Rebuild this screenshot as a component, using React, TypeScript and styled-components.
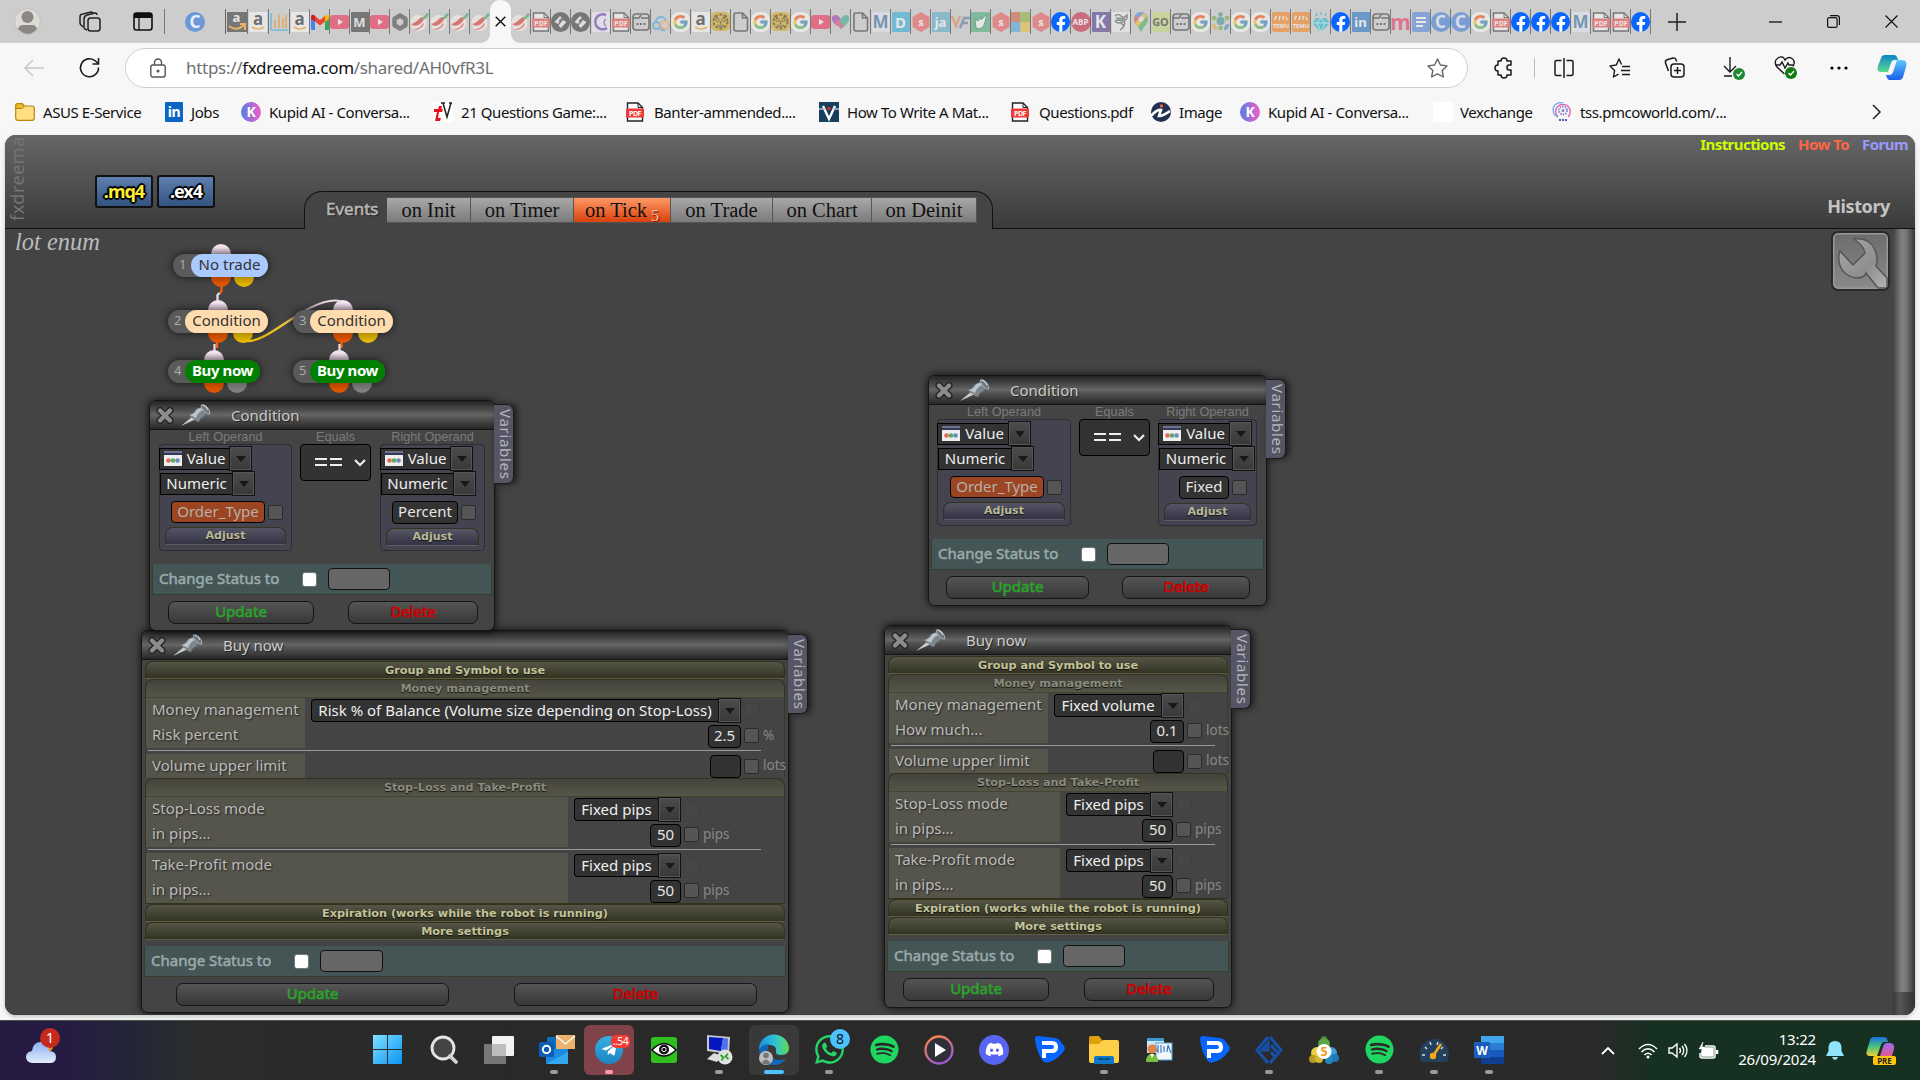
import React from "react";
import styled, { createGlobalStyle, css } from "styled-components";
import { FaDiscord, FaFacebookF, FaSpotify, FaTelegramPlane, FaWhatsapp } from "react-icons/fa";
import { FcGoogle } from "react-icons/fc";

//favicons
type Fav = {
  kind: string;
  text?: string;
  bg?: string;
  color?: string;
  size?: number;
  round?: boolean;
  full?: boolean;
};

const letter = (text: string, bg: string, color: string, size = 14, round = false): Fav => ({
  kind: "letter",
  text,
  bg,
  color,
  size,
  round,
});
const g: Fav = { kind: "google" };
const fb: Fav = { kind: "facebook", full: true };
const pdf: Fav = { kind: "pdf" };
const chili: Fav = { kind: "chili" };
const yt: Fav = { kind: "youtube" };
const doc: Fav = { kind: "doc" };
const dots: Fav = { kind: "dots" };
const tiger: Fav = { kind: "tiger" };
const amazon: Fav = { kind: "amazon" };
const gem: Fav = { kind: "gem" };
const sHex: Fav = { kind: "shex" };
const temu: Fav = { kind: "temu" };
const coursera = letter("C", "#2a6fdb", "#e8eefc", 17, true);
const mIcon = letter("M", "#e6eef5", "#1f5f93", 17);

const leftTabs: Fav[] = [
  { kind: "amazonDark" },
  amazon,
  { kind: "bars" },
  amazon,
  { kind: "gmail", full: true },
  yt,
  letter("M", "#222", "#eee", 13),
  yt,
  { kind: "hexagon" },
  chili,
  chili,
  chili,
  chili,
];
const rightTabs: Fav[] = [
  chili, pdf, { kind: "diamondDark" }, { kind: "diamondDark" }, { kind: "moon" }, pdf, dots,
  { kind: "cloud" }, g, amazon, tiger, doc, g, tiger, g, yt, { kind: "heart" }, doc, mIcon,
  letter("D", "#1aa7d8", "#fff", 15), sHex, letter("ja", "#4aa8c8", "#fff", 13), { kind: "vf" },
  { kind: "leaf" }, sHex, { kind: "microsoft" }, sHex, fb, letter("ABP", "#c70d2c", "#fff", 8, true),
  letter("K", "#3b2584", "#fff", 17), { kind: "scribble" }, { kind: "maps" },
  letter("GO", "#c5dc70", "#222", 11), dots, g, { kind: "people" }, g, g, temu, temu, gem, fb,
  letter("in", "#0a66c2", "#fff", 13), dots, letter("m", "transparent", "#ee1c4e", 21),
  { kind: "lines" }, coursera, coursera, g, pdf, fb, fb, fb, mIcon, pdf, pdf, fb,
];

const FavIcon = ({ kind }: { kind: string }) => {
  switch (kind) {
    case "google":
      return (
        <svg width="19" height="20" viewBox="0 0 19 20">
          <rect width="19" height="20" rx="8" fill="#fff" />
          <FcGoogle x="1" y="1.500" width="17" height="17" size={17} />
        </svg>
      );
    case "facebook":
      return (
        <FbCircle>
          <FaFacebookF size={16} />
        </FbCircle>
      );
    case "pdf":
      return (
        <svg width="18" height="20" viewBox="0 0 18 20">
          <path d="M1.500 1h10.500l4.500 4.500v13.500h-15z" fill="#fff" stroke="#222" strokeWidth="1.400" />
          <path d="M12 1v4.500h4.500" fill="none" stroke="#222" />
          <rect y="6.500" width="18" height="9" rx="1" fill="#f23a3a" />
          <text x="9" y="13.800" fontSize="7" fontWeight="700" fill="#fff" textAnchor="middle" fontFamily="Noto Sans, sans-serif">PDF</text>
        </svg>
      );
    case "chili":
      return (
        <svg width="19" height="19" viewBox="0 0 19 19">
          <circle cx="8.500" cy="11" r="8" fill="#fbf6f2" />
          <path d="M1 12C6 11 8 7 12 5c3 0 2 4-1 6-3 3-7 4-10 1z" fill="#e2231a" />
          <path d="M3 17c5 0 8-3 10-6 2 1 0 4-2 5-2 2-5 3-8 1z" fill="#ef6a5c" />
          <path d="M12 6c2-1 3-3 5-5l2 1c-1 3-4 5-6 6z" fill="#2f9e3f" />
        </svg>
      );
    case "youtube":
      return (
        <svg width="19" height="14" viewBox="0 0 19 14">
          <rect width="19" height="14" rx="3" fill="#f4133f" />
          <path d="M8 4l5 3-5 3z" fill="#fff" />
        </svg>
      );
    case "doc":
      return (
        <svg width="16" height="20" viewBox="0 0 16 20">
          <path d="M3 1h6.500l5 5v11q0 2-2 2H3q-2 0-2-2V3q0-2 2-2zM9.500 1v5h5" fill="none" stroke="#222" strokeWidth="1.600" />
        </svg>
      );
    case "dots":
      return (
        <svg width="18" height="18" viewBox="0 0 18 18" fill="none" stroke="#222" strokeWidth="1.600">
          <rect x="1" y="1" width="16" height="16" rx="3" />
          <path d="M1 5h6l2-3M9 5h8" />
          <path d="M4.500 11h2M8 11h2M11.500 11h2" strokeWidth="2" />
        </svg>
      );
    case "tiger":
      return (
        <svg width="19" height="19" viewBox="0 0 19 19" fill="none" stroke="#3a2c00">
          <rect width="19" height="19" rx="5" fill="#dca400" stroke="none" />
          <circle cx="9.500" cy="9.500" r="7" strokeDasharray="3 1.500" strokeWidth="2" />
          <circle cx="6.500" cy="8" r="1.600" />
          <circle cx="12.500" cy="8" r="1.600" />
          <path d="M9.500 9v4M6 13l3.500 2 3.500-2M3 4l4 2M16 4l-4 2" strokeWidth="1.400" />
        </svg>
      );
    case "amazon":
      return (
        <AmazonTile>
          a
          <svg width="14" height="5" viewBox="0 0 14 5">
            <path d="M1 1q6 4 12 0" stroke="#ff9900" strokeWidth="1.600" fill="none" />
          </svg>
        </AmazonTile>
      );
    case "amazonDark":
      return (
        <AmazonTile $dark>
          a
          <svg width="18" height="9" viewBox="0 0 18 9">
            <path d="M1 3q8 6 15-1M12 1h5v6" stroke="#ff9900" strokeWidth="2" fill="none" />
          </svg>
        </AmazonTile>
      );
    case "bars":
      return (
        <svg width="18" height="20" viewBox="0 0 18 20">
          <path d="M1 1v17h17" stroke="#4ab0e0" strokeWidth="2" fill="none" />
          <path d="M5 8v8M9 3v13M13 6v10M16 3v13" stroke="#f0922a" strokeWidth="2" />
        </svg>
      );
    case "gmail":
      return (
        <svg width="18" height="16" viewBox="0 0 18 16">
          <path d="M0 3v12q0 1 1 1h3V6z" fill="#4285f4" />
          <path d="M18 3v12q0 1-1 1h-3V6z" fill="#34a853" />
          <path d="M14 6V2l1-1q3-1 3 2v2l-4 3z" fill="#fbbc04" />
          <path d="M4 7.500V2l5 4 5-4v5.500l-5 4z" fill="#ea4335" />
          <path d="M0 5V3q0-3 3-2l1 1v5.500z" fill="#c5221f" />
        </svg>
      );
    case "hexagon":
      return (
        <svg width="16" height="18" viewBox="0 0 16 18">
          <path d="M8 2.500l5.500 3.200v6.600L8 15.500l-5.500-3.200V5.700z" fill="none" stroke="#333" strokeWidth="4.500" strokeLinejoin="round" />
        </svg>
      );
    case "diamondDark":
      return (
        <svg width="19" height="20" viewBox="0 0 19 20">
          <rect width="19" height="20" rx="9.500" fill="#222" />
          <path d="M3.500 10L9 4l2.500 2.500L7 12zM7.500 13.500L12 8l3.500 2L10 16z" fill="#eee" />
          <path d="M8 9.500l3-3" stroke="#222" strokeWidth="1.500" />
        </svg>
      );
    case "moon":
      return (
        <svg width="18" height="20" viewBox="0 0 18 20">
          <rect width="18" height="20" fill="#f4eefc" />
          <path d="M14 3a7.500 7.500 0 1 0 1 13" fill="none" stroke="#5a2fa8" strokeWidth="2.500" />
          <path d="M14 7a4 4 0 0 0 0 7" stroke="#5a2fa8" fill="none" strokeWidth="1.300" />
        </svg>
      );
    case "cloud":
      return (
        <svg width="18" height="18" viewBox="0 0 18 18" fill="none" strokeWidth="2">
          <path d="M4 9a5 4.500 0 0 1 10-1" stroke="#39a0e0" />
          <circle cx="4.500" cy="12.500" r="3.500" stroke="#39a0e0" />
          <circle cx="13" cy="12" r="4" stroke="#f0a850" />
          <path d="M8 15q2 3 5 2" stroke="#39a0e0" />
        </svg>
      );
    case "heart":
      return (
        <svg width="19" height="18" viewBox="0 0 19 18">
          <path d="M1 7q-1-5 4-5 2 0 5 4l-4 7q-4-3-5-6z" fill="#8d2bb0" />
          <path d="M18 7q1-5-4-5-2 0-8 10l4 4q7-5 8-9z" fill="#22a27e" />
          <path d="M6 6l6 6-2 4-6-6z" fill="#e7366a" />
        </svg>
      );
    case "shex":
      return (
        <svg width="18" height="20" viewBox="0 0 18 20">
          <path d="M9 0l8.500 5v10L9 20l-8.500-5V5z" fill="#f04a4a" />
          <text x="9" y="14" fontSize="11" fontWeight="700" textAnchor="middle" fill="#fff" fontFamily="Noto Sans, sans-serif">s</text>
        </svg>
      );
    case "temu":
      return (
        <svg width="18" height="20" viewBox="0 0 18 20">
          <rect width="18" height="20" rx="2" fill="#fb7701" />
          <path d="M3 8V6l1.500-2M7 8l1-4M11 8V5l1-1M15 8l-1-3" stroke="#fff" strokeWidth="1.300" fill="none" />
          <text x="9" y="15.500" fontSize="5.800" fontWeight="700" textAnchor="middle" fill="#fff" fontFamily="Noto Sans, sans-serif">TEMU</text>
        </svg>
      );
    case "vf":
      return (
        <svg width="19" height="14" viewBox="0 0 19 14" fill="none" strokeWidth="2.500">
          <path d="M1 1l4 10 4-10" stroke="#e0803a" />
          <path d="M9 13l4-10h6M11 8h6" stroke="#4a6d96" />
        </svg>
      );
    case "leaf":
      return (
        <svg width="19" height="20" viewBox="0 0 19 20">
          <rect width="19" height="20" fill="#35a86a" />
          <path d="M4 7l1 9q7 3 9-6l2-8-6 6V4l-3 5z" fill="#fff" stroke="#174" />
        </svg>
      );
    case "microsoft":
      return (
        <svg width="19" height="20" viewBox="0 0 19 20">
          <rect width="9.500" height="10" fill="#d2502a" />
          <rect x="9.500" width="9.500" height="10" fill="#7fae1e" />
          <rect y="10" width="9.500" height="10" fill="#3aa0dc" />
          <rect x="9.500" y="10" width="9.500" height="10" fill="#f0b828" />
        </svg>
      );
    case "scribble":
      return (
        <svg width="18" height="20" viewBox="0 0 18 20">
          <rect width="18" height="20" fill="#f4f4f4" />
          <path d="M3 4q3-3 6 0t6-1q1 4-2 5t-6 0q-5 0-3 2 4 2 7 0t1 4q-2 3-4 4M4 6l9 1M8 10l4 4" stroke="#555" strokeWidth="1.500" fill="none" />
        </svg>
      );
    case "maps":
      return (
        <svg width="14" height="20" viewBox="0 0 14 20">
          <path d="M7 0a7 7 0 0 1 7 7q0 4-4 8l-3 5-3-5q-4-4-4-8a7 7 0 0 1 7-7z" fill="#34a853" />
          <path d="M7 0a7 7 0 0 0-6 4l4 3 5-6z" fill="#3f7ce8" />
          <path d="M1 4q-2 3 0 7l5-6z" fill="#e04438" />
          <path d="M1 11l3 4 9-11-3-3z" fill="#f5bb18" />
          <circle cx="7" cy="7" r="2.500" fill="#eee" />
        </svg>
      );
    case "people":
      return (
        <svg width="19" height="19" viewBox="0 0 19 19">
          <circle cx="9.500" cy="9" r="4" fill="#2e8a8a" />
          <circle cx="9.500" cy="2.500" r="2.300" fill="#2e8a8a" />
          <circle cx="3" cy="6" r="2.300" fill="#60a830" />
          <circle cx="16" cy="6" r="2.300" fill="#60a830" />
          <path d="M1 12q5-1 5 6-5 0-5-6z" fill="#e0a82a" />
          <path d="M18 12q-5-1-5 6 5 0 5-6z" fill="#2a88c8" />
          <circle cx="9.500" cy="16" r="2.300" fill="#60a830" />
        </svg>
      );
    case "gem":
      return (
        <svg width="18" height="20" viewBox="0 0 18 20">
          <path d="M4 6h10l4 5-9 9-9-9z" fill="#12b0d0" />
          <path d="M0 11h18M9 20L5 11l4-5 4 5z" stroke="#9ff" fill="none" />
          <path d="M9 0v3M4 1l1 3M14 1l-1 3" stroke="#12b0d0" strokeWidth="1.500" />
        </svg>
      );
    case "lines":
      return (
        <svg width="18" height="20" viewBox="0 0 18 20">
          <rect width="18" height="20" rx="2" fill="#3f7ae0" />
          <path d="M4 6h10M4 10h10M4 14h7" stroke="#fff" strokeWidth="2" />
        </svg>
      );
    default:
      return null;
  }
};

const renderFav = (fav: Fav) =>
  fav.kind === "letter" ? (
    <LetterIcon $bg={fav.bg} $color={fav.color} $size={fav.size} $round={fav.round}>
      {fav.text}
    </LetterIcon>
  ) : (
    <FavIcon kind={fav.kind} />
  );

//bookmarks
const bookmarks = [
  { label: "ASUS E-Service", width: 150, gap: 28, icon: "folder" },
  { label: "Jobs", width: 76, gap: 26, icon: "in" },
  { label: "Kupid AI - Conversa...", width: 192, gap: 28, icon: "kupid" },
  { label: "21 Questions Game:...", width: 193, gap: 28, icon: "tv" },
  { label: "Banter-ammended....", width: 193, gap: 28, icon: "pdf" },
  { label: "How To Write A Mat...", width: 192, gap: 28, icon: "v" },
  { label: "Questions.pdf", width: 140, gap: 28, icon: "pdf" },
  { label: "Image", width: 89, gap: 28, icon: "image" },
  { label: "Kupid AI - Conversa...", width: 193, gap: 28, icon: "kupid" },
  { label: "Vexchange", width: 122, gap: 27, icon: "blank" },
  { label: "tss.pmcoworld.com/...", width: 180, gap: 25, icon: "tss" },
];

const BookmarkIcon = ({ icon }: { icon: string }) => {
  switch (icon) {
    case "folder":
      return (
        <svg width="20" height="18" viewBox="0 0 20 18">
          <path d="M.7 3q0-2.300 2-2.300h4.500l2 2.300H17q2.300 0 2.300 2.300V15q0 2.300-2.300 2.300H3Q.7 17.300.7 15z" fill="#ffdf82" stroke="#b8860b" strokeWidth="1.200" />
          <path d="M.7 5.500h6.500l2-2.300-2-2.500H2.700q-2 0-2 2z" fill="#ecb92e" stroke="#b8860b" />
        </svg>
      );
    case "in":
      return <LetterIcon $bg="#0a66c2" $color="#fff" $size={14}>in</LetterIcon>;
    case "kupid":
      return <KupidIcon>K</KupidIcon>;
    case "tv":
      return (
        <svg width="20" height="20" viewBox="0 0 20 20">
          <rect width="20" height="20" fill="#fff" />
          <path d="M1 7h9l-1 3H6l-1 6h3l-1 3H2l2-9H1zM6 4h3l-1 4H5z" fill="#e8101c" />
          <path d="M8 1h4M10 1l4 14 4-14M16 1h3" fill="none" stroke="#222" strokeWidth="1.500" />
        </svg>
      );
    case "pdf":
      return <FavIcon kind="pdf" />;
    case "v":
      return (
        <svg width="20" height="20" viewBox="0 0 20 20">
          <rect width="20" height="20" fill="#17405f" />
          <path d="M4 4l6 13 6-13" fill="none" stroke="#fff" strokeWidth="2.400" />
          <path d="M0 7h6M14 7h6" stroke="#aebecb" strokeWidth="1.300" />
          <circle cx="10" cy="6.500" r="1.800" fill="#e02828" />
        </svg>
      );
    case "image":
      return (
        <svg width="20" height="20" viewBox="0 0 20 20">
          <circle cx="10" cy="10" r="10" fill="#23304f" />
          <path d="M0 14q6-7 10-6l-2 6q4 0 11-5" fill="none" stroke="#fff" strokeWidth="2.600" />
          <circle cx="10.500" cy="4" r="1.700" fill="#ee5a46" />
        </svg>
      );
    case "tss":
      return (
        <svg width="16" height="20" viewBox="0 0 16 20" fill="none">
          <path d="M3 15A7.300 7.300 0 1 1 13 15" stroke="#e65fb0" strokeWidth="1.300" />
          <path d="M3 15A7.300 7.300 0 0 1 8 1" stroke="#62a8f0" strokeWidth="1.300" />
          <circle cx="8" cy="8.500" r="4" stroke="#8a80c8" strokeWidth="2" strokeDasharray="1.500 1" />
          <circle cx="8" cy="8.500" r="1.500" fill="#8a80c8" />
          <path d="M4 18h8" stroke="#5060b0" strokeWidth="2" strokeDasharray="2 1" />
        </svg>
      );
    default:
      return <BlankIcon />;
  }
};

const tabBarEvents = [
  { label: "on Init", width: 84 },
  { label: "on Timer", width: 103 },
  { label: "on Tick", width: 97, count: 5 },
  { label: "on Trade", width: 102 },
  { label: "on Chart", width: 99 },
  { label: "on Deinit", width: 105 },
];

//diagram blocks
const blocks = [
  { id: 1, name: "No trade", x: 173, y: 254, num: 18, width: 95, port: 48, out: 71, color: "#a9c9ff" },
  { id: 2, name: "Condition", x: 168, y: 310, num: 17, width: 100, port: 50, out: 75, color: "#ffdcae" },
  { id: 3, name: "Condition", x: 293, y: 310, num: 17, width: 100, port: 50, out: 75, color: "#ffdcae" },
  { id: 4, name: "Buy now", x: 168, y: 360, num: 17, width: 92, port: 46, out: 69, color: "#008000" },
  { id: 5, name: "Buy now", x: 293, y: 360, num: 17, width: 92, port: 46, out: 69, color: "#008000" },
];

const PinIcon = () => (
  <svg width="30" height="22" viewBox="0 0 30 22">
    <path d="M0 22L12 12l3 3z" fill="#c9cccd" />
    <path d="M8 11q5-1 6-5l6-3 6 6-4 4q-3 1-4 5-3 0-5-3-3-1-5-4z" fill="#7d868c" />
    <path d="M9 11q6-2 7-6l4-1 2 2q-5 2-7 8z" fill="#bcc5ca" />
    <path d="M20 1q3-1 6 2t3 7q-2 1-5-2t-4-7z" fill="#6d7880" stroke="#a7b1b7" />
    <path d="M22 1q3 1 5 5" stroke="#e8eef0" fill="none" />
  </svg>
);

const CloseIcon = () => (
  <svg width="18" height="18" viewBox="0 0 18 18">
    <path d="M4 4.500l10 10M14 4.500l-10 10" stroke="#242424" strokeWidth="7" strokeLinecap="round" />
    <path d="M4 4.500l10 10M14 4.500l-10 10" stroke="#8c8c8c" strokeWidth="4.400" strokeLinecap="round" />
  </svg>
);

const ValueIcon = () => (
  <svg width="18" height="15" viewBox="0 0 18 15">
    <rect width="18" height="15" fill="#eee" />
    <rect width="18" height="4" fill="#323a5c" />
    <path d="M0 1h18" stroke="#aab" />
    <circle cx="4.500" cy="9.500" r="2.300" fill="#e06a55" />
    <circle cx="9" cy="9.500" r="2.300" fill="#5cac60" />
    <circle cx="13.500" cy="9.500" r="2.300" fill="#6b8ac0" />
  </svg>
);

type WindowProps = {
  title: string;
  x: number;
  y: number;
  w: number;
  h: number;
  children: React.ReactNode;
};

const BlockWindow = ({ title, x, y, w, h, children }: WindowProps) => (
  <WindowBox $x={x} $y={y} $w={w} $h={h}>
    <WindowHeader>
      <CloseIcon />
      <PinIcon />
      <WindowTitle>{title}</WindowTitle>
    </WindowHeader>
    {children}
    <VariablesTab>Variables</VariablesTab>
  </WindowBox>
);

const Dropdown = ({ label, width, icon, square }: { label: string; width?: number; icon?: boolean; square?: boolean }) => (
  <SelectBox $width={width}>
    <SelectText $square={square}>
      {icon && <ValueIcon />}
      <SelectLabel>{label}</SelectLabel>
    </SelectText>
    <SelectArrow>
      <svg width="10" height="6" viewBox="0 0 10 6">
        <path d="M0 0h10L5 6z" fill="#181818" />
      </svg>
    </SelectArrow>
  </SelectBox>
);

type FooterProps = {
  checkLeft: number;
  inputWidth: number;
  left: number;
  update: number;
  between: number;
  remove: number;
};

const WindowFooter = ({ checkLeft, inputWidth, left, update, between, remove }: FooterProps) => (
  <>
    <StatusBar>
      <StatusLabel $width={checkLeft}>Change Status to</StatusLabel>
      <WhiteCheck />
      <StatusInput $width={inputWidth} />
    </StatusBar>
    <ButtonRow $left={left} $between={between}>
      <ActionBtn $width={update} $color="#2ca02c">Update</ActionBtn>
      <ActionBtn $width={remove} $color="#cc0000">Delete</ActionBtn>
    </ButtonRow>
  </>
);

type ConditionProps = {
  x: number;
  y: number;
  w: number;
  leftWidth: number;
  rightWidth: number;
  gaps: [number, number, number];
  selects: [number, number];
  leftIndent: number;
  right: string;
  rightInput: number;
  rightIndent: number;
  footer: FooterProps;
};

const ConditionWindow = (props: ConditionProps) => (
  <BlockWindow title="Condition" x={props.x} y={props.y} w={props.w} h={231}>
    <OperandRow>
      <Operand $width={props.leftWidth} $gap={props.gaps[0]}>
        <OperandLabel>Left Operand</OperandLabel>
        <OperandBox>
          <Dropdown label="Value" icon square width={props.selects[0]} />
          <Dropdown label="Numeric" square width={props.selects[1]} />
          <ParamRow $indent={props.leftIndent}>
            <ParamInput $width={94} $orange>Order_Type</ParamInput>
            <SmallCheck />
          </ParamRow>
          <AdjustBar>Adjust</AdjustBar>
        </OperandBox>
      </Operand>
      <Operand $width={71} $gap={props.gaps[1]}>
        <OperandLabel>Equals</OperandLabel>
        <EqualsBox>
          <EqualsSign>
            <path d="M0 2h12M15 2h12M0 8h12M15 8h12" stroke="#eee" strokeWidth="1.800" />
          </EqualsSign>
          <svg width="12" height="8" viewBox="0 0 12 8">
            <path d="M1 1l5 5 5-5" fill="none" stroke="#eee" strokeWidth="2.200" />
          </svg>
        </EqualsBox>
      </Operand>
      <Operand $width={props.rightWidth} $gap={props.gaps[2]}>
        <OperandLabel>Right Operand</OperandLabel>
        <OperandBox>
          <Dropdown label="Value" icon square width={props.selects[0]} />
          <Dropdown label="Numeric" square width={props.selects[1]} />
          <ParamRow $indent={props.rightIndent}>
            <ParamInput $width={props.rightInput}>{props.right}</ParamInput>
            <SmallCheck />
          </ParamRow>
          <AdjustBar>Adjust</AdjustBar>
        </OperandBox>
      </Operand>
    </OperandRow>
    <WindowFooter {...props.footer} />
  </BlockWindow>
);

type FieldProps = {
  label: string;
  labelWidth: number;
  controls: number;
  unit?: string;
  height?: number;
  children: React.ReactNode;
};

const Field = ({ label, labelWidth, controls, unit, height = 25, children }: FieldProps) => (
  <FieldRow $height={height}>
    <FieldLabel $width={labelWidth}>{label}</FieldLabel>
    <FieldControls $width={controls}>{children}</FieldControls>
    <SmallCheck $ghost={!unit} />
    <Unit>{unit}</Unit>
  </FieldRow>
);

type BuyProps = {
  x: number;
  y: number;
  w: number;
  mode: string;
  modeWidth: number;
  amountLabel: string;
  amount: string;
  amountWidth: number;
  amountUnit: string;
  limitWidth: number;
  money: [number, number];
  stops: [number, number];
  pipsWidth: [number, number];
  hr: number;
  footer: FooterProps;
};

const BuyWindow = (props: BuyProps) => {
  const money = { labelWidth: props.money[0], controls: props.money[1] };
  const stops = { labelWidth: props.stops[0], controls: props.stops[1] };
  return (
    <BlockWindow title="Buy now" x={props.x} y={props.y} w={props.w} h={383}>
      <Groups>
        <GroupBar>Group and Symbol to use</GroupBar>
        <GroupBar $open>Money management</GroupBar>
        <GroupBody>
          <Field label="Money management" {...money}>
            <Dropdown label={props.mode} width={props.modeWidth} />
          </Field>
          <Field label={props.amountLabel} unit={props.amountUnit} {...money}>
            <ParamInput $width={props.amountWidth}>{props.amount}</ParamInput>
          </Field>
          <Divider $width={props.hr} />
          <Field label="Volume upper limit" unit="lots" height={24} {...money}>
            <ParamInput $width={props.limitWidth} />
          </Field>
        </GroupBody>
        <GroupBar $open>Stop-Loss and Take-Profit</GroupBar>
        <GroupBody>
          <Field label="Stop-Loss mode" {...stops}>
            <Dropdown label="Fixed pips" width={props.pipsWidth[0]} />
          </Field>
          <Field label="in pips..." unit="pips" {...stops}>
            <ParamInput $width={props.pipsWidth[1]}>50</ParamInput>
          </Field>
          <Divider $width={props.hr} />
          <Field label="Take-Profit mode" {...stops}>
            <Dropdown label="Fixed pips" width={props.pipsWidth[0]} />
          </Field>
          <Field label="in pips..." unit="pips" {...stops}>
            <ParamInput $width={props.pipsWidth[1]}>50</ParamInput>
          </Field>
        </GroupBody>
        <GroupBar>Expiration (works while the robot is running)</GroupBar>
        <GroupBar>More settings</GroupBar>
      </Groups>
      <WindowFooter {...props.footer} />
    </BlockWindow>
  );
};

//taskbar
const TelegramCircle = styled.div`
  display: flex;
  align-items: center;
  justify-content: center;
  width: 28px;
  height: 28px;
  border-radius: 50%;
  background: linear-gradient(#37aee2, #1c84c0);
  color: #fff;
`;
const DiscordCircle = styled(TelegramCircle)`
  width: 30px;
  height: 30px;
  background: #5865f2;
`;

const BlueP = () => (
  <svg width="31" height="30" viewBox="0 0 31 30">
    <path d="M1 4q0-3 3-3l17 2q3 0 6 4l3 4q2 3-1 6-6 8-14 10-4 2-7-2Q2 15 1 4z" fill="#0866ff" />
    <path d="M10 23V16h8q4 0 4-4t-4-4H8" fill="none" stroke="#fff" strokeWidth="4" />
  </svg>
);

const SpotifyIcon = () => <FaSpotify size={29} color="#1ed760" />;

const taskItems: { id: string; running?: boolean; icon: React.ReactNode }[] = [
  {
    id: "start",
    icon: (
      <svg width="29" height="29" viewBox="0 0 29 29">
        <defs>
          <linearGradient id="win" x2="1" y2="1">
            <stop stopColor="#7fe0ff" />
            <stop offset="1" stopColor="#0a94f5" />
          </linearGradient>
        </defs>
        <path d="M0 0h14v14H0zM15 0h14v14H15zM0 15h14v14H0zM15 15h14v14H15z" fill="url(#win)" />
      </svg>
    ),
  },
  {
    id: "search",
    icon: (
      <svg width="30" height="30" viewBox="0 0 30 30">
        <circle cx="14" cy="13" r="11" fill="#444" stroke="#e3e6e8" strokeWidth="2.800" />
        <path d="M21 21l6 6" stroke="#d0d4d6" strokeWidth="3.800" strokeLinecap="round" />
      </svg>
    ),
  },
  {
    id: "taskview",
    icon: (
      <svg width="30" height="28" viewBox="0 0 30 28">
        <rect x="8" width="22" height="20" rx="1" fill="#f2f2f2" />
        <rect y="8" width="22" height="20" rx="1" fill="#777" />
        <rect x="8" y="8" width="14" height="12" fill="#bdbdbd" />
      </svg>
    ),
  },
  {
    id: "outlook",
    running: true,
    icon: (
      <svg width="36" height="30" viewBox="0 0 36 30">
        <path d="M8 2h12v26H8z" fill="#0f6cbd" />
        <path d="M7 14h22v14q0 1-1 1H8q-1 0-1-1z" fill="#1b8ae0" />
        <path d="M7 29l22-12v11q0 1-1 1z" fill="#36a6f2" />
        <rect y="7" width="15" height="15" rx="1.500" fill="#0a5cb5" />
        <circle cx="7.500" cy="14.500" r="3.700" fill="none" stroke="#fff" strokeWidth="2" />
        <rect x="17" width="19" height="14" fill="#eab26d" />
        <path d="M17 1l9.500 8L36 1" fill="none" stroke="#fff" strokeWidth="1.300" />
      </svg>
    ),
  },
  {
    id: "telegram",
    running: true,
    icon: (
      <TelegramCircle>
        <FaTelegramPlane size={17} />
      </TelegramCircle>
    ),
  },
  {
    id: "eye",
    icon: (
      <svg width="26" height="26" viewBox="0 0 26 26">
        <rect width="26" height="26" rx="3" fill="#2fc01f" />
        <path d="M1 13q12-13 24 0-12 12-24 0z" fill="#fff" stroke="#111" strokeWidth="1.600" />
        <circle cx="13" cy="12.500" r="5" fill="#111" />
        <circle cx="13" cy="12.500" r="2.200" fill="none" stroke="#fff" />
      </svg>
    ),
  },
  {
    id: "remote",
    running: true,
    icon: (
      <svg width="30" height="30" viewBox="0 0 30 30">
        <path d="M3 0l23 2-1 17-22-3z" fill="#c5c9ce" />
        <path d="M5 2l14 1-2 13-12-2z" fill="#0717c0" />
        <path d="M19 3l5 .5-.5 13-6.500-.5z" fill="#4f6ff0" />
        <path d="M3 24l7-6 8 3-5 6z" fill="#ddd" />
        <circle cx="21" cy="22" r="7.500" fill="#dfe3df" />
        <path d="M16.500 20l3 2.500-2 3M24 18.500l-2.500 3 3 2.500" stroke="#28a428" strokeWidth="1.800" fill="none" />
      </svg>
    ),
  },
  {
    id: "edge",
    running: true,
    icon: (
      <svg width="30" height="30" viewBox="0 0 30 30">
        <defs>
          <linearGradient id="edge" x2="1">
            <stop stopColor="#1d8fe0" />
            <stop offset=".55" stopColor="#2fc3d0" />
            <stop offset="1" stopColor="#62da54" />
          </linearGradient>
        </defs>
        <path d="M0 15A15 14.500 0 0 1 30 13q0 7-8 7-6 0-5-4 1-6-7-6-7 0-10 5z" fill="url(#edge)" />
        <path d="M0 15q3-6 10-6-3 6 0 11t12 5l5-1q-5 6-12 6Q1 30 0 15z" fill="#1268b8" />
        <circle cx="7" cy="23" r="7" fill="#bdbdbd" />
        <circle cx="7" cy="20.500" r="2.800" fill="#777" />
        <path d="M2.500 28q4.500-7 9 0-4.500 3-9 0z" fill="#777" />
      </svg>
    ),
  },
  { id: "whatsapp", running: true, icon: <FaWhatsapp size={33} color="#25d366" /> },
  { id: "spotify", icon: <SpotifyIcon /> },
  {
    id: "player",
    icon: (
      <svg width="30" height="30" viewBox="0 0 30 30">
        <defs>
          <linearGradient id="play" x2=".5" y2="1">
            <stop stopColor="#ff8a3c" />
            <stop offset="1" stopColor="#a45bd0" />
          </linearGradient>
        </defs>
        <circle cx="15" cy="15" r="13.500" fill="#2f2f38" stroke="url(#play)" strokeWidth="2.300" />
        <path d="M11 8l11 7-11 7z" fill="#fff" />
      </svg>
    ),
  },
  {
    id: "discord",
    icon: (
      <DiscordCircle>
        <FaDiscord size={19} />
      </DiscordCircle>
    ),
  },
  { id: "pa", icon: <BlueP /> },
  {
    id: "explorer",
    running: true,
    icon: (
      <svg width="30" height="28" viewBox="0 0 30 28">
        <path d="M0 2q0-2 2-2h8l3 4v6H0z" fill="#e0a008" />
        <path d="M0 8h10l4-4h14q2 0 2 2v19q0 2-2 2H2q-2 0-2-2z" fill="#ffcf48" />
        <path d="M5 28v-6q0-2 2-2h16q2 0 2 2v6z" fill="#0f78c8" />
        <path d="M9 23h12" stroke="#073f70" strokeWidth="1.500" />
      </svg>
    ),
  },
  {
    id: "accounts",
    icon: (
      <svg width="26" height="26" viewBox="0 0 26 26">
        <rect x="1" y="1" width="17" height="15" fill="#cfe8f5" />
        <path d="M1 1h17v3H1z" fill="#3b98cc" />
        <rect x="10" y="6" width="16" height="17" fill="#f4f7fa" stroke="#4aa0d0" />
        <path d="M8 15V9l4 6V8M15 16V8M18 9v6M21 15l1-7 3 8" stroke="#3b78c0" fill="none" strokeWidth="1.200" />
        <circle cx="6" cy="12" r="4.500" fill="#e2854a" />
        <path d="M0 25q0-8 6-8 6 0 6 8z" fill="#7ac040" />
        <path d="M4 17l2 4 2-4z" fill="#fff" />
      </svg>
    ),
  },
  { id: "pb", icon: <BlueP /> },
  {
    id: "layers",
    running: true,
    icon: (
      <svg width="28" height="28" viewBox="0 0 28 28" fill="none" stroke="#1650a8" strokeWidth="3">
        <path d="M13 1L2 14l11 13" />
        <path d="M15 1l11 13-11 13M7 14l6-7v7zM16 9l6 7M16 16l3 4" />
      </svg>
    ),
  },
  {
    id: "mt5",
    icon: (
      <svg width="30" height="28" viewBox="0 0 30 28">
        <circle cx="15" cy="3" r="3" fill="#3d8a35" />
        <circle cx="15" cy="8" r="6" fill="#5aa545" />
        <circle cx="8" cy="17" r="6" fill="#e6d03c" />
        <circle cx="4" cy="23" r="4" fill="#b89a20" />
        <circle cx="10" cy="23" r="4" fill="#d2b830" />
        <circle cx="22" cy="17" r="6" fill="#3aa0d0" />
        <circle cx="26" cy="22" r="4" fill="#1e78b8" />
        <circle cx="20" cy="24" r="4" fill="#2a86c0" />
        <circle cx="15" cy="15.500" r="7.500" fill="#fff" />
        <text x="15" y="20" fontSize="12.500" fontWeight="700" textAnchor="middle" fill="#f0a010" fontFamily="Noto Sans, sans-serif">5</text>
      </svg>
    ),
  },
  { id: "spotify2", running: true, icon: <SpotifyIcon /> },
  {
    id: "gauge",
    running: true,
    icon: (
      <svg width="30" height="24" viewBox="0 0 30 24">
        <path d="M1 21Q-1 8 8 3t16 1q8 7 5 18-1 2-3 2H4q-2 0-3-3z" fill="#25405c" />
        <path d="M3 17h3M24 17h3M6 9l2 2M22 11l2-2M11 4l1 3M19 4l-1 3" stroke="#ddd" strokeWidth="1.400" />
        <path d="M22 6l-8 12" stroke="#f5a81c" strokeWidth="2.600" />
        <circle cx="14" cy="18" r="3.200" fill="#f5a81c" />
      </svg>
    ),
  },
  {
    id: "word",
    running: true,
    icon: (
      <svg width="30" height="28" viewBox="0 0 30 28">
        <rect x="7" width="23" height="7" fill="#41a5ee" />
        <rect x="7" y="7" width="23" height="7" fill="#2b7cd3" />
        <rect x="7" y="14" width="23" height="7" fill="#185abd" />
        <rect x="7" y="21" width="23" height="7" fill="#103f91" />
        <rect y="6" width="16" height="16" rx="1" fill="#1a5dbe" />
        <text x="8" y="18.500" fontSize="12" fontWeight="700" textAnchor="middle" fill="#fff" fontFamily="Noto Sans, sans-serif">W</text>
      </svg>
    ),
  },
];

const App = () => {
  return (
    <Screen>
      <GlobalStyle />
      <TabStrip>
        <StripTools>
          <svg width="27" height="27" viewBox="0 0 27 27">
            <circle cx="13.500" cy="13.500" r="13" fill="#dedbd5" stroke="#c2c0bb" />
            <circle cx="13.500" cy="9" r="6" fill="#8a8784" />
            <path d="M4 21q1-4 5-4h9q4 0 5 4-9 10-19 0z" fill="#8a8784" />
          </svg>
          <svg width="22" height="22" viewBox="0 0 22 22" fill="none" stroke="#222" strokeWidth="1.500">
            <rect x="9" y="7" width="12" height="13" rx="2.500" />
            <path d="M8 19l-2-1q-1 0-1-2V8q0-3 3-4l8-2q2 0 2 2" />
            <path d="M4 16l-2-2q-1-1-1-2V6q0-3 3-3l8-2q2 0 2 1" />
          </svg>
          <svg width="20" height="19" viewBox="0 0 20 19">
            <rect x="1" y="1" width="18" height="17" rx="2.500" fill="none" stroke="#111" strokeWidth="1.600" />
            <path d="M1 5V3q0-2 2-2h14q2 0 2 2v3H1z" fill="#111" />
            <path d="M6 6v12" stroke="#111" strokeWidth="1.300" />
          </svg>
        </StripTools>
        <PinnedTab>
          <LetterIcon $bg="#6c98d8" $color="#e8eefc" $size={17} $round>C</LetterIcon>
        </PinnedTab>
        {leftTabs.map((fav, i) => (
          <TabCell key={i} $width={i === 0 ? 22 : i < 3 ? 21 : 20} $full={fav.full} $last={i === leftTabs.length - 1}>
            {renderFav(fav)}
          </TabCell>
        ))}
        <ActiveTab>
          <svg width="11" height="11" viewBox="0 0 11 11">
            <path d="M.7.700l9.600 9.600M10.300.700L.700 10.300" stroke="#111" strokeWidth="1.400" />
          </svg>
        </ActiveTab>
        {rightTabs.map((fav, i) => (
          <TabCell key={i} $width={20} $full={fav.full}>
            {renderFav(fav)}
          </TabCell>
        ))}
        <WindowButtons>
          <svg width="18" height="18" viewBox="0 0 18 18">
            <path d="M9 0v18M0 9h18" stroke="#222" strokeWidth="1.500" />
          </svg>
          <svg width="13" height="2" viewBox="0 0 13 2">
            <path d="M0 1h13" stroke="#111" strokeWidth="1.300" />
          </svg>
          <svg width="13" height="13" viewBox="0 0 13 13" fill="none" stroke="#111" strokeWidth="1.200">
            <rect x=".6" y="2.600" width="9.500" height="9.800" rx="1.500" />
            <path d="M3 .6h7q2.400 0 2.400 2.400v7" />
          </svg>
          <svg width="13" height="13" viewBox="0 0 13 13">
            <path d="M.5.500l12 12M12.500.500l-12 12" stroke="#111" strokeWidth="1.200" />
          </svg>
        </WindowButtons>
      </TabStrip>

      <Toolbar>
        <NavIcons>
          <svg width="20" height="18" viewBox="0 0 20 18" fill="none" stroke="#c8c8c8" strokeWidth="1.600">
            <path d="M9 1L1 9l8 8M1 9h19" />
          </svg>
          <svg width="21" height="21" viewBox="0 0 21 21" fill="none" stroke="#1b1b1b" strokeWidth="1.600">
            <path d="M19.500 10.500a9 9 0 1 1-3-6.500l2.500 2.500" />
            <path d="M19.500 1v6h-6" />
          </svg>
        </NavIcons>
        <AddressBar>
          <svg width="16" height="20" viewBox="0 0 16 20" fill="none" stroke="#555" strokeWidth="1.400">
            <rect x=".8" y="7" width="14.400" height="12" rx="2" />
            <path d="M4.500 7V4.500a3.500 3.500 0 0 1 7 0V7" />
            <circle cx="8" cy="13" r=".8" fill="#555" />
          </svg>
          <Url>
            https://<b>fxdreema.com</b>/shared/AH0vfR3L
          </Url>
          <svg width="21" height="20" viewBox="0 0 21 20" fill="none" stroke="#666" strokeWidth="1.400" strokeLinejoin="round">
            <path d="M10.500 1l2.900 6 6.600.900-4.800 4.600 1.200 6.500-5.900-3.100L4.600 19l1.200-6.500L1 7.900 7.600 7z" />
          </svg>
        </AddressBar>
        <ToolIcons>
          <ToolIcon $gap={25}>
            <svg width="22" height="22" viewBox="0 0 22 22" fill="none" stroke="#1b1b1b" strokeWidth="1.500" strokeLinejoin="round">
              <path d="M5 4h3q0-3 3-3t3 3h4v4h-2q-2 0-2 2.500t2 2.500h2v5h-4q0 3-3 3t-3-3H5v-4q-3 0-3-3t3-3z" />
            </svg>
          </ToolIcon>
          <ToolDivider />
          <ToolIcon $gap={19}>
            <svg width="20" height="20" viewBox="0 0 20 20" fill="none" stroke="#1b1b1b" strokeWidth="1.500">
              <path d="M10 0v20M7.500 2.500h-5Q1 2.500 1 4v12q0 1.500 1.500 1.500h5M12.500 2.500h5Q19 2.500 19 4v12q0 1.500-1.500 1.500h-5" />
            </svg>
          </ToolIcon>
          <ToolIcon $gap={35}>
            <svg width="21" height="20" viewBox="0 0 21 20" fill="none" stroke="#1b1b1b" strokeWidth="1.400" strokeLinejoin="round">
              <path d="M12.500 6.500L10 1 7.300 7 1 7.900l4.600 4.500L4.500 19l5-2.800M13 8.500h8M12 12.500h9M13 16.500h8" />
            </svg>
          </ToolIcon>
          <ToolIcon $gap={34}>
            <svg width="21" height="21" viewBox="0 0 21 21" fill="none" stroke="#1b1b1b" strokeWidth="1.500">
              <rect x="7" y="7" width="13" height="13" rx="3" />
              <path d="M13.500 10v7M10 13.500h7M4.500 14L1.500 6Q1 3.500 3 2.700L9 1q2-.5 3 1.500l.7 2" />
            </svg>
          </ToolIcon>
          <ToolIcon $gap={38}>
            <svg width="22" height="24" viewBox="0 0 22 24" fill="none" stroke="#1b1b1b" strokeWidth="1.400">
              <path d="M7 1v15M1 10l6 6 6-6M1 20h8" />
              <circle cx="16" cy="18" r="6" fill="#1d8a35" stroke="none" />
              <path d="M13.500 18l2 2 3.500-4" stroke="#fff" />
            </svg>
          </ToolIcon>
          <ToolIcon $gap={29}>
            <svg width="24" height="23" viewBox="0 0 24 23" fill="none" stroke="#1b1b1b" strokeWidth="1.400">
              <path d="M10.500 18L3 11Q-1 5 4 2t7 2q3-4 7-1.500t1 8M1 9h5l2-3 3 6 3-5 1 2h4" />
              <circle cx="17" cy="17" r="6" fill="#0f7a12" stroke="none" />
              <path d="M14.500 17l2 2 3.500-4" stroke="#fff" />
            </svg>
          </ToolIcon>
          <ToolIcon $gap={32}>
            <svg width="18" height="4" viewBox="0 0 18 4">
              <circle cx="2" cy="2" r="1.600" />
              <circle cx="9" cy="2" r="1.600" />
              <circle cx="16" cy="2" r="1.600" />
            </svg>
          </ToolIcon>
          <ToolIcon $gap={29}>
            <svg width="30" height="27" viewBox="0 0 30 27">
              <defs>
                <linearGradient id="cop1" x2="0" y2="1">
                  <stop stopColor="#0a84c8" />
                  <stop offset="1" stopColor="#5fdc8c" />
                </linearGradient>
                <linearGradient id="cop2" x2="0" y2="1">
                  <stop stopColor="#5cc8ff" />
                  <stop offset="1" stopColor="#1a5ee8" />
                </linearGradient>
              </defs>
              <path d="M8 1h9q3 0 4 5h-4q-2 0-3 3l-3 9H4q-5 0-3-6L4 4q1-3 4-3z" fill="url(#cop1)" />
              <path d="M22 26h-9q-3 0-4-5h4q2 0 3-3l4-12h5q6 0 4 7l-3 10q-1 3-4 3z" fill="url(#cop2)" />
            </svg>
          </ToolIcon>
        </ToolIcons>
      </Toolbar>

      <BookmarkBar>
        {bookmarks.map((item, i) => (
          <Bookmark key={i} $width={item.width}>
            <BookmarkSlot $width={item.gap}>
              <BookmarkIcon icon={item.icon} />
            </BookmarkSlot>
            {item.label}
          </Bookmark>
        ))}
        <MoreBookmarks width="9" height="16" viewBox="0 0 9 16">
          <path d="M1 1l7 7-7 7" fill="none" stroke="#222" strokeWidth="1.500" />
        </MoreBookmarks>
      </BookmarkBar>

      <Page>
        <PageHeader>
          <SideLogo>fxdreema</SideLogo>
          <ExportButtons>
            <ExportBtn $color="#ffee33">.mq4</ExportBtn>
            <ExportBtn $color="#fff">.ex4</ExportBtn>
          </ExportButtons>
          <EventTabs>
            <EventsLabel>Events</EventsLabel>
            {tabBarEvents.map((tab) => (
              <EventTab key={tab.label} $width={tab.width} $active={!!tab.count}>
                {tab.label}
                {tab.count && <EventCount>{tab.count}</EventCount>}
              </EventTab>
            ))}
          </EventTabs>
          <HeaderRight>
            <HelpLinks>
              <HelpLink $color="#ccff00">Instructions</HelpLink>
              <HelpLink $color="#ff6644">How To</HelpLink>
              <HelpLink $color="#9999ff">Forum</HelpLink>
            </HelpLinks>
            <History>History</History>
          </HeaderRight>
        </PageHeader>
        <Canvas>
          <ProjectName>lot enum</ProjectName>
          <CanvasSide>
            <WrenchBtn>
              <svg width="52" height="53" viewBox="0 0 52 53">
                <defs>
                  <linearGradient id="wr" x2="1" y2="1">
                    <stop stopColor="#a6a6a6" />
                    <stop offset=".6" stopColor="#8f8f8f" />
                    <stop offset="1" stopColor="#b4b4b4" />
                  </linearGradient>
                </defs>
                <path d="M19 4q14-2 20 9 5 9 2 18l11 12v10h-9L31 38q-1 5-10 5-11-2-15-10Q2 25 5 16l13 14 12-12q-1-7-11-14z" fill="url(#wr)" stroke="#555" strokeWidth="1.500" />
              </svg>
            </WrenchBtn>
            <ScrollTrack>
              <ScrollThumb />
            </ScrollTrack>
          </CanvasSide>
        </Canvas>
      </Page>

      <Board>
        <Links viewBox="0 0 420 420">
          <defs>
            <linearGradient id="wire" gradientUnits="userSpaceOnUse" x1="0" y1="341" x2="0" y2="300">
              <stop stopColor="#f2c200" />
              <stop offset=".5" stopColor="#e8c24a" />
              <stop offset=".75" stopColor="#a79da2" />
              <stop offset="1" stopColor="#f0e0ee" />
            </linearGradient>
          </defs>
          <path d="M221.500 284v7l-2 3" stroke="#ff5f0a" />
          <path d="M219.500 293l-2 2v7" stroke="#f3dcea" />
          <path d="M217 340v8" stroke="#ff5f0a" />
          <path d="M214.500 344v9" stroke="#f3dcea" />
          <path d="M341.500 340v8" stroke="#ff5f0a" />
          <path d="M339.500 344v9" stroke="#f3dcea" />
          <path d="M244 341C268 345 304 300 336 300.500L345 302" stroke="url(#wire)" />
        </Links>
        {blocks.map((b) => (
          <BlockNode key={b.id} $x={b.x} $y={b.y} $w={b.width}>
            <Port $x={b.port} $side="top" $color="#f3e3ef" />
            <Port $x={b.port} $side="bottom" $color="#ee5a00" />
            <Port $x={b.out} $side="bottom" $color={b.id > 3 ? "#8a8a8a" : "#f0c000"} />
            <NodeNum $width={b.num}>{b.id}</NodeNum>
            <NodeName $color={b.color} $buy={b.id > 3}>
              {b.name}
            </NodeName>
          </BlockNode>
        ))}
        <BuyWindow
          x={141} y={630} w={648}
          mode="Risk % of Balance (Volume size depending on Stop-Loss)" modeWidth={430}
          amountLabel="Risk percent" amount="2.5" amountWidth={33} amountUnit="%" limitWidth={31}
          money={[159, 436]} stops={[422, 113]} pipsWidth={[107, 31]} hr={613}
          footer={{ checkLeft: 143, inputWidth: 63, left: 34, update: 273, between: 65, remove: 243 }}
        />
        <ConditionWindow
          x={149} y={400} w={346} leftWidth={133} rightWidth={105} gaps={[9, 8, 9]}
          selects={[93, 95]} leftIndent={11} right="Percent" rightInput={66} rightIndent={11}
          footer={{ checkLeft: 143, inputWidth: 62, left: 18, update: 146, between: 34, remove: 130 }}
        />
        <ConditionWindow
          x={928} y={375} w={339} leftWidth={134} rightWidth={99} gaps={[8, 8, 8]}
          selects={[94, 96]} leftIndent={12} right="Fixed" rightInput={50} rightIndent={20}
          footer={{ checkLeft: 143, inputWidth: 62, left: 17, update: 143, between: 33, remove: 128 }}
        />
        <BuyWindow
          x={884} y={625} w={348}
          mode="Fixed volume" modeWidth={130}
          amountLabel="How much..." amount="0.1" amountWidth={34} amountUnit="lots" limitWidth={31}
          money={[159, 136]} stops={[171, 113]} pipsWidth={[107, 31]} hr={324}
          footer={{ checkLeft: 143, inputWidth: 62, left: 18, update: 146, between: 35, remove: 130 }}
        />
      </Board>

      <Taskbar>
        <Weather>
          <svg width="32" height="32" viewBox="0 0 32 32">
            <defs>
              <linearGradient id="cld" x2="0" y2="1">
                <stop stopColor="#8ab0f5" />
                <stop offset="1" stopColor="#e3ecfb" />
              </linearGradient>
            </defs>
            <circle cx="21" cy="14" r="7" fill="#f08a20" />
            <path d="M7 31q-6-1-6-6t6-6q1-9 9-9t8 9q7 0 7 6t-6 6z" fill="url(#cld)" />
          </svg>
          <RedBadge>1</RedBadge>
        </Weather>
        <TaskItems>
          {taskItems.map((item) => (
            <TaskItem key={item.id} $state={item.id}>
              {item.icon}
              {item.running && <Indicator $state={item.id} />}
              {item.id === "telegram" && <TelegramBadge>..54</TelegramBadge>}
              {item.id === "whatsapp" && <BlueBadge>8</BlueBadge>}
            </TaskItem>
          ))}
        </TaskItems>
        <Tray>
          <svg width="14" height="9" viewBox="0 0 14 9">
            <path d="M1 8l6-6 6 6" fill="none" stroke="#fff" strokeWidth="1.800" />
          </svg>
          <svg width="20" height="16" viewBox="0 0 20 16" fill="none" stroke="#fff" strokeWidth="1.600">
            <path d="M1 6q9-9 18 0M3.500 9q6.500-6.500 13 0M6.500 12q3.500-3.500 7 0" />
            <circle cx="10" cy="14" r="1.500" fill="#fff" stroke="none" />
          </svg>
          <svg width="20" height="17" viewBox="0 0 20 17" fill="none" stroke="#fff" strokeWidth="1.400">
            <path d="M1 6h3l5-4v13l-5-4H1zM11.500 6q2 2.500 0 5M14 4q3.500 4.500 0 9M16.500 2q5 6.500 0 13" />
          </svg>
          <svg width="21" height="17" viewBox="0 0 21 17" fill="none" stroke="#fff" strokeWidth="1.500">
            <path d="M7 4h8q2 0 2 2v8q0 2-2 2H4q-2 0-2-2v-3" />
            <path d="M7 6h8v8H4v-3z" fill="#fff" />
            <path d="M19 8v4" strokeWidth="2.500" />
            <path d="M5 0L1 7h3l-1 5 4-7H4z" fill="#fff" strokeWidth=".5" />
          </svg>
          <Clock>
            <span>13:22</span>
            <span>26/09/2024</span>
          </Clock>
          <svg width="18" height="19" viewBox="0 0 18 19" fill="#8fe3fb">
            <path d="M9 0q6 0 6.500 6v4l2.500 5H0l2.500-5V6Q3 0 9 0zM6 16h6q-1 3-3 3t-3-3z" />
          </svg>
          <svg width="30" height="29" viewBox="0 0 30 29">
            <defs>
              <linearGradient id="pre1" x2="0" y2="1">
                <stop stopColor="#1b6fe0" />
                <stop offset=".5" stopColor="#45c080" />
                <stop offset="1" stopColor="#f0d030" />
              </linearGradient>
              <linearGradient id="pre2" x2="0" y2="1">
                <stop stopColor="#9a6af0" />
                <stop offset="1" stopColor="#f0587a" />
              </linearGradient>
            </defs>
            <path d="M8 1h10q3 0 4 5h-4q-2 0-3 3l-4 11H4q-5 0-3-6L4 4q1-3 4-3z" fill="url(#pre1)" />
            <path d="M13 23l4-12q1-4 4-4h3q5 0 4 6l-3 10z" fill="url(#pre2)" />
            <rect x="7" y="20" width="23" height="9" rx="2" fill="#ffc60a" />
            <text x="18.500" y="27.500" fontSize="8" fontWeight="700" textAnchor="middle" fill="#222" fontFamily="Noto Sans, sans-serif">PRE</text>
          </svg>
        </Tray>
      </Taskbar>
    </Screen>
  );
};

const GlobalStyle = createGlobalStyle`
  * {
    box-sizing: border-box;
  }
  body {
    margin: 0;
    overflow: hidden;
    background: #f7f7f7;
    font-family: "Noto Sans", sans-serif;
  }
  svg {
    display: block;
    flex: none;
    overflow: visible;
  }
`;

const Screen = styled.div`
  position: relative;
  display: flex;
  flex-direction: column;
  width: 1920px;
  height: 1080px;
  overflow: hidden;
  background: #f7f7f7;
`;

const TabStrip = styled.div`
  display: flex;
  align-items: center;
  height: 43px;
  background: #cdcdcd;
`;
const StripTools = styled.div`
  display: flex;
  align-items: center;
  gap: 39px;
  width: 165px;
  height: 25px;
  padding-left: 14px;
  border-right: 1px solid #777;
  & > :nth-child(2) {
    margin-left: -1px;
  }
  & > :nth-child(3) {
    margin-left: -7px;
  }
`;
const PinnedTab = styled.div`
  display: flex;
  align-items: center;
  justify-content: center;
  width: 61px;
  height: 25px;
  border-right: 1px solid #666;
`;
const LetterIcon = styled.div<{ $bg?: string; $color?: string; $size?: number; $round?: boolean }>`
  display: flex;
  flex: none;
  align-items: center;
  justify-content: center;
  width: ${({ $round }) => ($round ? 20 : 18)}px;
  height: 20px;
  border-radius: ${({ $round }) => ($round ? "50%" : "1px")};
  background: ${({ $bg }) => $bg};
  color: ${({ $color }) => $color};
  font-size: ${({ $size }) => $size}px;
  font-weight: 700;
  line-height: 20px;
`;
const AmazonTile = styled.div<{ $dark?: boolean }>`
  display: flex;
  flex-direction: column;
  align-items: center;
  width: ${({ $dark }) => ($dark ? 20 : 18)}px;
  height: 20px;
  background: ${({ $dark }) => ($dark ? "#222" : "#fff")};
  color: ${({ $dark }) => ($dark ? "#fff" : "#111")};
  font-size: ${({ $dark }) => ($dark ? 13 : 17)}px;
  font-weight: 700;
  line-height: ${({ $dark }) => ($dark ? 11 : 14)}px;
`;
const TabCell = styled.div<{ $width: number; $full?: boolean; $last?: boolean }>`
  display: flex;
  flex: none;
  align-items: center;
  justify-content: center;
  width: ${({ $width }) => $width}px;
  height: 25px;
  border-right: ${({ $last }) => ($last ? "none" : "1px solid #777")};
  & > * {
    opacity: ${({ $full }) => ($full ? 1 : 0.5)};
  }
`;
const FbCircle = styled.div`
  display: flex;
  flex: none;
  align-items: flex-end;
  justify-content: center;
  width: 19px;
  height: 20px;
  overflow: hidden;
  border-radius: 50%;
  background: #0866ff;
  color: #fff;
`;
const ActiveTab = styled.div`
  position: relative;
  display: flex;
  flex: none;
  align-items: center;
  justify-content: center;
  width: 21px;
  height: 43px;
  border-radius: 10px 10px 0 0;
  background: #f7f7f7;
  &::before,
  &::after {
    content: "";
    position: absolute;
    bottom: 0;
    width: 9px;
    height: 9px;
  }
  &::before {
    right: 100%;
    background: radial-gradient(circle at 0 0, transparent 8.5px, #f7f7f7 9px);
  }
  &::after {
    left: 100%;
    background: radial-gradient(circle at 100% 0, transparent 8.5px, #f7f7f7 9px);
  }
`;
const WindowButtons = styled.div`
  display: flex;
  align-items: center;
  padding-left: 17px;
  & > :nth-child(2) {
    margin-left: 83px;
  }
  & > :nth-child(n + 3) {
    margin-left: 45px;
  }
`;

const Toolbar = styled.div`
  display: flex;
  align-items: center;
  height: 49px;
`;
const NavIcons = styled.div`
  display: flex;
  align-items: center;
  gap: 35px;
  width: 125px;
  padding-left: 24px;
`;
const AddressBar = styled.div`
  display: flex;
  align-items: center;
  width: 1343px;
  height: 40px;
  padding: 0 19px 0 24px;
  border: 1.5px solid #cfcfcf;
  border-radius: 20px;
  background: #fff;
`;
const Url = styled.div`
  flex: 1;
  padding: 0 0 1px 20px;
  color: #707070;
  font-size: 17px;
  letter-spacing: -0.3px;
  white-space: nowrap;
  b {
    color: #111;
    font-weight: 400;
  }
`;
const ToolIcons = styled.div`
  display: flex;
  align-items: center;
`;
const ToolIcon = styled.div<{ $gap: number }>`
  margin-left: ${({ $gap }) => $gap}px;
`;
const ToolDivider = styled.div`
  width: 1px;
  height: 20px;
  margin-left: 19px;
  background: #bbb;
`;

const BookmarkBar = styled.div`
  display: flex;
  align-items: center;
  height: 43px;
  padding: 0 0 3px 15px;
`;
const Bookmark = styled.div<{ $width: number }>`
  display: flex;
  flex: none;
  align-items: center;
  width: ${({ $width }) => $width}px;
  color: #111;
  font-size: 15px;
  letter-spacing: -0.42px;
  white-space: nowrap;
`;
const BookmarkSlot = styled.div<{ $width: number }>`
  flex: none;
  width: ${({ $width }) => $width}px;
`;
const BlankIcon = styled.div`
  width: 20px;
  height: 20px;
  background: #fff;
`;
const KupidIcon = styled(LetterIcon).attrs({ $round: true, $size: 14, $color: "#fff" })`
  background: linear-gradient(90deg, #5a7de0, #ee60c8);
`;
const MoreBookmarks = styled.svg`
  margin-left: 137px;
`;

const Page = styled.div`
  display: flex;
  flex-direction: column;
  width: 1910px;
  height: 880px;
  margin-left: 5px;
  overflow: hidden;
  border-radius: 11px;
  background: #444;
  box-shadow: 0 2px 4px rgba(0, 0, 0, 0.2);
`;
const PageHeader = styled.div`
  display: flex;
  flex: none;
  height: 94px;
  border-bottom: 1px solid #111;
  background: linear-gradient(#666, #3b3b3b);
`;
const SideLogo = styled.div`
  width: 25px;
  height: 86px;
  padding-right: 2px;
  color: #737373;
  font-size: 18px;
  line-height: 21px;
  letter-spacing: 0.5px;
  writing-mode: vertical-rl;
  transform: rotate(180deg);
`;
const ExportButtons = styled.div`
  display: flex;
  gap: 4px;
  width: 274px;
  padding: 40px 0 0 65px;
`;
const ExportBtn = styled.div<{ $color: string }>`
  width: 58px;
  height: 33px;
  border: 2px solid #111;
  border-radius: 3px;
  background: linear-gradient(#5f7fb0, #33547f);
  color: ${({ $color }) => $color};
  font-size: 18px;
  font-weight: 700;
  line-height: 28px;
  letter-spacing: -1px;
  text-align: center;
  text-shadow: 2px 0 1px #000, -2px 0 1px #000, 0 2px 1px #000, 0 -2px 1px #000, 1px 1px 1px #000,
    -1px -1px 1px #000, 1px -1px 1px #000, -1px 1px 1px #000;
`;
const EventTabs = styled.div`
  display: flex;
  width: 689px;
  height: 38px;
  margin-top: 56px;
  padding: 5px 0 0 21px;
  border: 1px solid #111;
  border-bottom: none;
  border-radius: 18px 18px 0 0;
  background: #444;
`;
const EventsLabel = styled.div`
  width: 61px;
  color: #b5b5b5;
  font-size: 17px;
  line-height: 24px;
  text-shadow: 1px 1px 1px #111;
  -webkit-text-stroke: 0.6px #b5b5b5;
`;
const EventTab = styled.div<{ $width: number; $active?: boolean }>`
  width: ${({ $width }) => $width}px;
  height: 26px;
  border: 1px solid #555;
  border-left: none;
  background: linear-gradient(#a8a8a8, #7b7b7b);
  color: #111;
  font-family: "Liberation Serif", serif;
  font-size: 20.5px;
  line-height: 24px;
  text-align: center;
  white-space: nowrap;
  ${(props) => {
    if (props.$active) {
      return css`
        background: linear-gradient(#ff9966, #d9400a);
      `;
    }
  }}
`;
const EventCount = styled.span`
  position: relative;
  top: 4px;
  margin-left: 4px;
  color: #ffc0a0;
  font-size: 16px;
  text-shadow: 1px 1px 1px #611;
`;
const HeaderRight = styled.div`
  display: flex;
  flex: 1;
  flex-direction: column;
  align-items: flex-end;
`;
const HelpLinks = styled.div`
  display: flex;
  gap: 13px;
  padding: 0 7px 0 0;
`;
const HelpLink = styled.span<{ $color: string }>`
  color: ${({ $color }) => $color};
  font-size: 15px;
  font-weight: 700;
  line-height: 18px;
  letter-spacing: -0.55px;
`;
const History = styled.div`
  margin: 40px 25px 0 0;
  color: #c4c4c4;
  font-size: 18px;
  font-weight: 700;
  line-height: 26px;
  letter-spacing: -0.4px;
`;
const Canvas = styled.div`
  display: flex;
  flex: 1;
  justify-content: space-between;
  background: #444;
`;
const ProjectName = styled.div`
  padding-left: 10px;
  color: #bbb;
  font-family: "Liberation Serif", serif;
  font-size: 24.5px;
  font-style: italic;
  line-height: 25px;
`;
const CanvasSide = styled.div`
  display: flex;
  gap: 3px;
`;
const WrenchBtn = styled.div`
  width: 59px;
  height: 60px;
  margin-top: 2px;
  padding: 2px;
  overflow: hidden;
  border: 2px solid #2a2a2a;
  border-radius: 7px;
  background: linear-gradient(#6c6c6c, #8a8a8a);
  box-shadow: inset 0 0 0 1.5px #999;
`;
const ScrollTrack = styled.div`
  width: 22px;
  background: linear-gradient(90deg, #3b3b3b, #555 30%, #333);
`;
const ScrollThumb = styled.div`
  height: 763px;
  background: linear-gradient(90deg, #444, #808080 40%, #777 60%, #333);
`;

/* free canvas over the page: diagram blocks and floating windows */
const Board = styled.div`
  position: absolute;
  inset: 0 0 65px 0;
  overflow: hidden;
`;
const Links = styled.svg`
  position: absolute;
  top: 0;
  left: 0;
  width: 420px;
  height: 420px;
  fill: none;
  stroke-width: 2.2;
`;
const BlockNode = styled.div<{ $x: number; $y: number; $w: number }>`
  position: absolute;
  left: ${({ $x }) => $x}px;
  top: ${({ $y }) => $y}px;
  display: flex;
  width: ${({ $w }) => $w}px;
  height: 23px;
  border-radius: 12px;
  background: #5a5a5a;
  box-shadow: 0 0 8px rgba(0, 0, 0, 0.7);
`;
const Port = styled.div<{ $x: number; $side: "top" | "bottom"; $color: string }>`
  position: absolute;
  left: ${({ $x }) => $x - 10}px;
  width: 20px;
  height: 10px;
  ${(props) =>
    props.$side === "top"
      ? css`
          top: -10px;
          border-radius: 10px 10px 0 0;
          background: linear-gradient(${props.$color} 30%, #8d808a);
        `
      : css`
          top: 23px;
          border-radius: 0 0 10px 10px;
          background: linear-gradient(rgba(0, 0, 0, 0.25), transparent), ${props.$color};
        `}
`;
const NodeNum = styled.div<{ $width: number }>`
  width: ${({ $width }) => $width}px;
  padding-left: 6px;
  color: #aaa;
  font-size: 13px;
  line-height: 20px;
`;
const NodeName = styled.div<{ $color: string; $buy?: boolean }>`
  position: relative;
  flex: 1;
  border-radius: 12px;
  background: ${({ $color }) => $color};
  color: ${({ $buy }) => ($buy ? "#fff" : "#333")};
  font-size: 15px;
  font-weight: ${({ $buy }) => ($buy ? 700 : 400)};
  line-height: 20px;
  letter-spacing: ${({ $buy }) => ($buy ? -0.4 : 0)}px;
  text-align: center;
  white-space: nowrap;
`;

const WindowBox = styled.div<{ $x: number; $y: number; $w: number; $h: number }>`
  position: absolute;
  left: ${({ $x }) => $x}px;
  top: ${({ $y }) => $y}px;
  display: flex;
  flex-direction: column;
  width: ${({ $w }) => $w}px;
  height: ${({ $h }) => $h}px;
  border: 1px solid #151515;
  border-radius: 7px;
  background: #444;
  box-shadow: 0 0 9px rgba(0, 0, 0, 0.85);
`;
const WindowHeader = styled.div`
  display: flex;
  flex: none;
  align-items: center;
  height: 29px;
  padding-left: 6px;
  border-bottom: 1px solid #151515;
  border-radius: 6px 6px 0 0;
  background: linear-gradient(#222, #666 50%, #555 60%, #262626);
  & > :nth-child(2) {
    margin: 0 0 0 7px;
  }
`;
const WindowTitle = styled.div`
  margin-left: 20px;
  color: #ccc;
  font-size: 15px;
  text-shadow: 1px 1px 1px #222;
`;
const VariablesTab = styled.div`
  position: absolute;
  left: 100%;
  top: 3px;
  width: 20px;
  height: 80px;
  border: 1px solid #1a1a1a;
  border-left: none;
  border-radius: 0 7px 7px 0;
  background: #555566;
  box-shadow: 3px 0 6px rgba(0, 0, 0, 0.6);
  color: #b5b5bd;
  font-size: 15px;
  line-height: 15px;
  letter-spacing: 0.7px;
  text-align: center;
  writing-mode: vertical-rl;
`;

const OperandRow = styled.div`
  display: flex;
  height: 121px;
  margin-bottom: 13px;
`;
const Operand = styled.div<{ $width: number; $gap: number }>`
  flex: none;
  width: ${({ $width }) => $width}px;
  margin-left: ${({ $gap }) => $gap}px;
`;
const OperandLabel = styled.div`
  height: 14px;
  color: #7b7b7b;
  font-family: "Liberation Sans", sans-serif;
  font-size: 12.7px;
  line-height: 14px;
  text-align: center;
  white-space: nowrap;
`;
const OperandBox = styled.div`
  height: 107px;
  padding-top: 1px;
  border: 1px solid #2c2c34;
  border-radius: 4px;
  background: #444450;
  & > :first-child {
    margin-left: -1px;
  }
`;
const SelectBox = styled.div<{ $width?: number }>`
  display: flex;
  align-items: center;
  width: ${({ $width }) => $width}px;
  height: 25px;
`;
const SelectText = styled.div<{ $square?: boolean }>`
  display: flex;
  flex: 1;
  align-items: center;
  justify-content: center;
  gap: 5px;
  height: ${({ $square }) => ($square ? 22 : 23)}px;
  border: 1px solid #000;
  border-right: none;
  border-radius: ${({ $square }) => ($square ? "0" : "4px 0 0 4px")};
  background: #333;
  color: #eee;
  font-size: 15px;
  white-space: nowrap;
`;
const SelectLabel = styled.span`
  padding-bottom: 2px;
`;
const SelectArrow = styled.div`
  display: flex;
  flex: none;
  align-items: center;
  justify-content: center;
  width: 23px;
  height: 25px;
  border: 1px solid #111;
  box-shadow: inset 0 0 0 1px #555;
  background: linear-gradient(#4c4c4c, #383838);
`;
const ParamRow = styled.div<{ $indent: number }>`
  display: flex;
  align-items: center;
  margin-top: 5px;
  padding-left: ${({ $indent }) => $indent}px;
`;
const ParamInput = styled.div<{ $width: number; $orange?: boolean }>`
  width: ${({ $width }) => $width}px;
  height: ${({ $orange }) => ($orange ? 22 : 23)}px;
  border: 1px solid #000;
  border-radius: 4px;
  background: ${({ $orange }) => ($orange ? "#9c4522" : "#333")};
  color: ${({ $orange }) => ($orange ? "#b5b0a8" : "#e5e5e5")};
  font-size: 15px;
  line-height: 19px;
  text-align: center;
`;
const SmallCheck = styled.div<{ $ghost?: boolean }>`
  flex: none;
  width: 15px;
  height: 15px;
  margin-left: 3px;
  border: 1px solid #2b2b2b;
  border-radius: 2px;
  background: #555;
  opacity: ${({ $ghost }) => ($ghost ? 0.12 : 1)};
`;
const AdjustBar = styled.div`
  height: 18px;
  margin: 4px 5px 0;
  border: 1px solid #33331f;
  border-bottom: 1px dotted #666;
  border-radius: 8px 8px 0 0;
  background: linear-gradient(#555566, #333344);
  color: #bbbb99;
  font-family: "DejaVu Sans", sans-serif;
  font-size: 11px;
  font-weight: 700;
  line-height: 16px;
  text-align: center;
  text-shadow: 0 1px 1px #111;
`;
const EqualsBox = styled.div`
  display: flex;
  align-items: center;
  gap: 12px;
  height: 37px;
  padding-left: 14px;
  border: 1px solid #000;
  border-radius: 4px;
  background: #333;
`;
const EqualsSign = styled.svg.attrs({ width: 27, height: 10, viewBox: "0 0 27 10" })`
  margin-top: -2px;
`;

const Groups = styled.div`
  margin: 1px 3px 6px;
`;
const GroupBar = styled.div<{ $open?: boolean }>`
  height: ${({ $open }) => ($open ? 19 : 18)}px;
  border: 1px solid #33331c;
  border-bottom: 1px dotted #666644;
  border-radius: 8px 8px 0 0;
  background: linear-gradient(#565648, #333322);
  color: #c4c499;
  font-family: "DejaVu Sans", sans-serif;
  font-size: 11.25px;
  font-weight: 700;
  line-height: 18px;
  text-align: center;
  text-shadow: 0 1px 1px #111;
  white-space: nowrap;
  ${(props) => {
    if (props.$open) {
      return css`
        border-bottom: 1px solid #444433;
        background: linear-gradient(#44443c, #555548);
        color: #8c8c7c;
      `;
    }
  }}
`;
const GroupBody = styled.div`
  border: 1px solid #3a3a28;
  border-top: none;
  border-bottom: none;
  &:nth-child(5) {
    border-bottom: 1px solid #33331c;
  }
`;
const FieldRow = styled.div<{ $height: number }>`
  display: flex;
  align-items: center;
  height: ${({ $height }) => $height}px;
`;
const FieldLabel = styled.div<{ $width: number }>`
  flex: none;
  width: ${({ $width }) => $width}px;
  height: 100%;
  padding-left: 6px;
  background: #55554c;
  color: #bbb;
  font-size: 15px;
  line-height: 22px;
  text-shadow: 1px 1px 2px #222;
  white-space: nowrap;
`;
const FieldControls = styled.div<{ $width: number }>`
  display: flex;
  flex: none;
  align-items: flex-end;
  justify-content: flex-end;
  width: ${({ $width }) => $width}px;
  height: 100%;
`;
const Unit = styled.div`
  margin-left: 4px;
  padding-bottom: 2px;
  color: #888;
  font-size: 13.5px;
  line-height: 20px;
`;
const Divider = styled.div<{ $width: number }>`
  width: ${({ $width }) => $width}px;
  height: 1px;
  margin: 2px 0 3px 2px;
  background: #999;
`;

const StatusBar = styled.div`
  display: flex;
  flex: none;
  align-items: center;
  height: 31px;
  margin: 0 2px;
  padding-left: 6px;
  border: 1px solid #33402c;
  border-top: none;
  background: #445555;
`;
const StatusLabel = styled.div<{ $width: number }>`
  width: ${({ $width }) => $width}px;
  padding-bottom: 2px;
  color: #9aabab;
  font-size: 15px;
  line-height: 26px;
  -webkit-text-stroke: 0.5px #9aabab;
  white-space: nowrap;
`;
const WhiteCheck = styled.div`
  width: 15px;
  height: 15px;
  border: 1px solid #767676;
  border-radius: 3px;
  background: #fff;
`;
const StatusInput = styled.div<{ $width: number }>`
  width: ${({ $width }) => $width}px;
  height: 22px;
  margin-left: 11px;
  border: 1px solid #111;
  border-radius: 4px;
  background: #666;
`;
const ButtonRow = styled.div<{ $left: number; $between: number }>`
  display: flex;
  gap: ${({ $between }) => $between}px;
  margin-top: 6px;
  padding-left: ${({ $left }) => $left}px;
`;
const ActionBtn = styled.div<{ $width: number; $color: string }>`
  width: ${({ $width }) => $width}px;
  height: 23px;
  border: 1px solid #151515;
  border-radius: 7px;
  background: linear-gradient(#555, #383838);
  color: ${({ $color }) => $color};
  font-size: 15px;
  line-height: 19px;
  text-align: center;
  -webkit-text-stroke: 0.7px ${({ $color }) => $color};
`;

const Taskbar = styled.div`
  display: flex;
  align-items: center;
  height: 60px;
  margin-top: 5px;
  border-top: 1px solid #445048;
  background: linear-gradient(90deg, #251b42 60px, #24243a 125px, #2a2d2c 190px, #292929 500px, #2a2a2a 1600px, #163022 1650px, #163022);
`;
const Weather = styled.div`
  position: relative;
  width: 361px;
  padding: 0 0 5px 25px;
`;
const RedBadge = styled.div`
  position: absolute;
  left: 40px;
  top: -4px;
  width: 20px;
  height: 20px;
  border-radius: 50%;
  background: #c42b1c;
  color: #fff;
  font-size: 14px;
  line-height: 20px;
  text-align: center;
`;
const TaskItems = styled.div`
  display: flex;
`;
const TaskItem = styled.div<{ $state: string }>`
  position: relative;
  display: flex;
  align-items: center;
  justify-content: center;
  width: 50px;
  height: 50px;
  margin-right: 5px;
  margin-top: -2px;
  padding-left: ${({ $state }) => ($state === "outlook" ? 6 : 0)}px;
  border-radius: 6px;
  background: ${({ $state }) =>
    $state === "telegram" ? "#80434a" : $state === "edge" ? "#393939" : "transparent"};
  &:first-child {
    margin-left: 1px;
    margin-right: 7px;
  }
`;
const Indicator = styled.div<{ $state: string }>`
  position: absolute;
  bottom: 1px;
  left: ${({ $state }) => ($state === "edge" ? 15 : 21)}px;
  width: ${({ $state }) => ($state === "edge" ? 20 : 8)}px;
  height: 4px;
  border-radius: 2px;
  background: ${({ $state }) =>
    $state === "edge" ? "#4cc2ff" : $state === "telegram" ? "#ff99a4" : "#9a9a9a"};
`;
const TelegramBadge = styled.div`
  position: absolute;
  right: 4px;
  top: 10px;
  width: 19px;
  height: 13px;
  border-radius: 5px;
  background: #f23c34;
  color: #fff;
  font-size: 10.5px;
  line-height: 13px;
  letter-spacing: -0.5px;
  text-align: center;
`;
const BlueBadge = styled.div`
  position: absolute;
  right: 4px;
  top: 4px;
  width: 20px;
  height: 20px;
  border-radius: 50%;
  background: #4cc2ff;
  color: #111;
  font-size: 14px;
  line-height: 20px;
  text-align: center;
`;
const Tray = styled.div`
  display: flex;
  flex: 1;
  align-items: center;
  margin-left: 82px;
  & > :nth-child(2) {
    margin-left: 23px;
  }
  & > :nth-child(3),
  & > :nth-child(4) {
    margin-left: 10px;
  }
  & > :nth-child(6) {
    margin-left: 10px;
  }
  & > :nth-child(7) {
    margin-left: 22px;
  }
`;
const Clock = styled.div`
  display: flex;
  flex-direction: column;
  align-items: flex-end;
  width: 97px;
  padding-bottom: 4px;
  color: #fff;
  font-size: 15px;
  line-height: 20px;
  letter-spacing: -0.2px;
`;

export default App;
